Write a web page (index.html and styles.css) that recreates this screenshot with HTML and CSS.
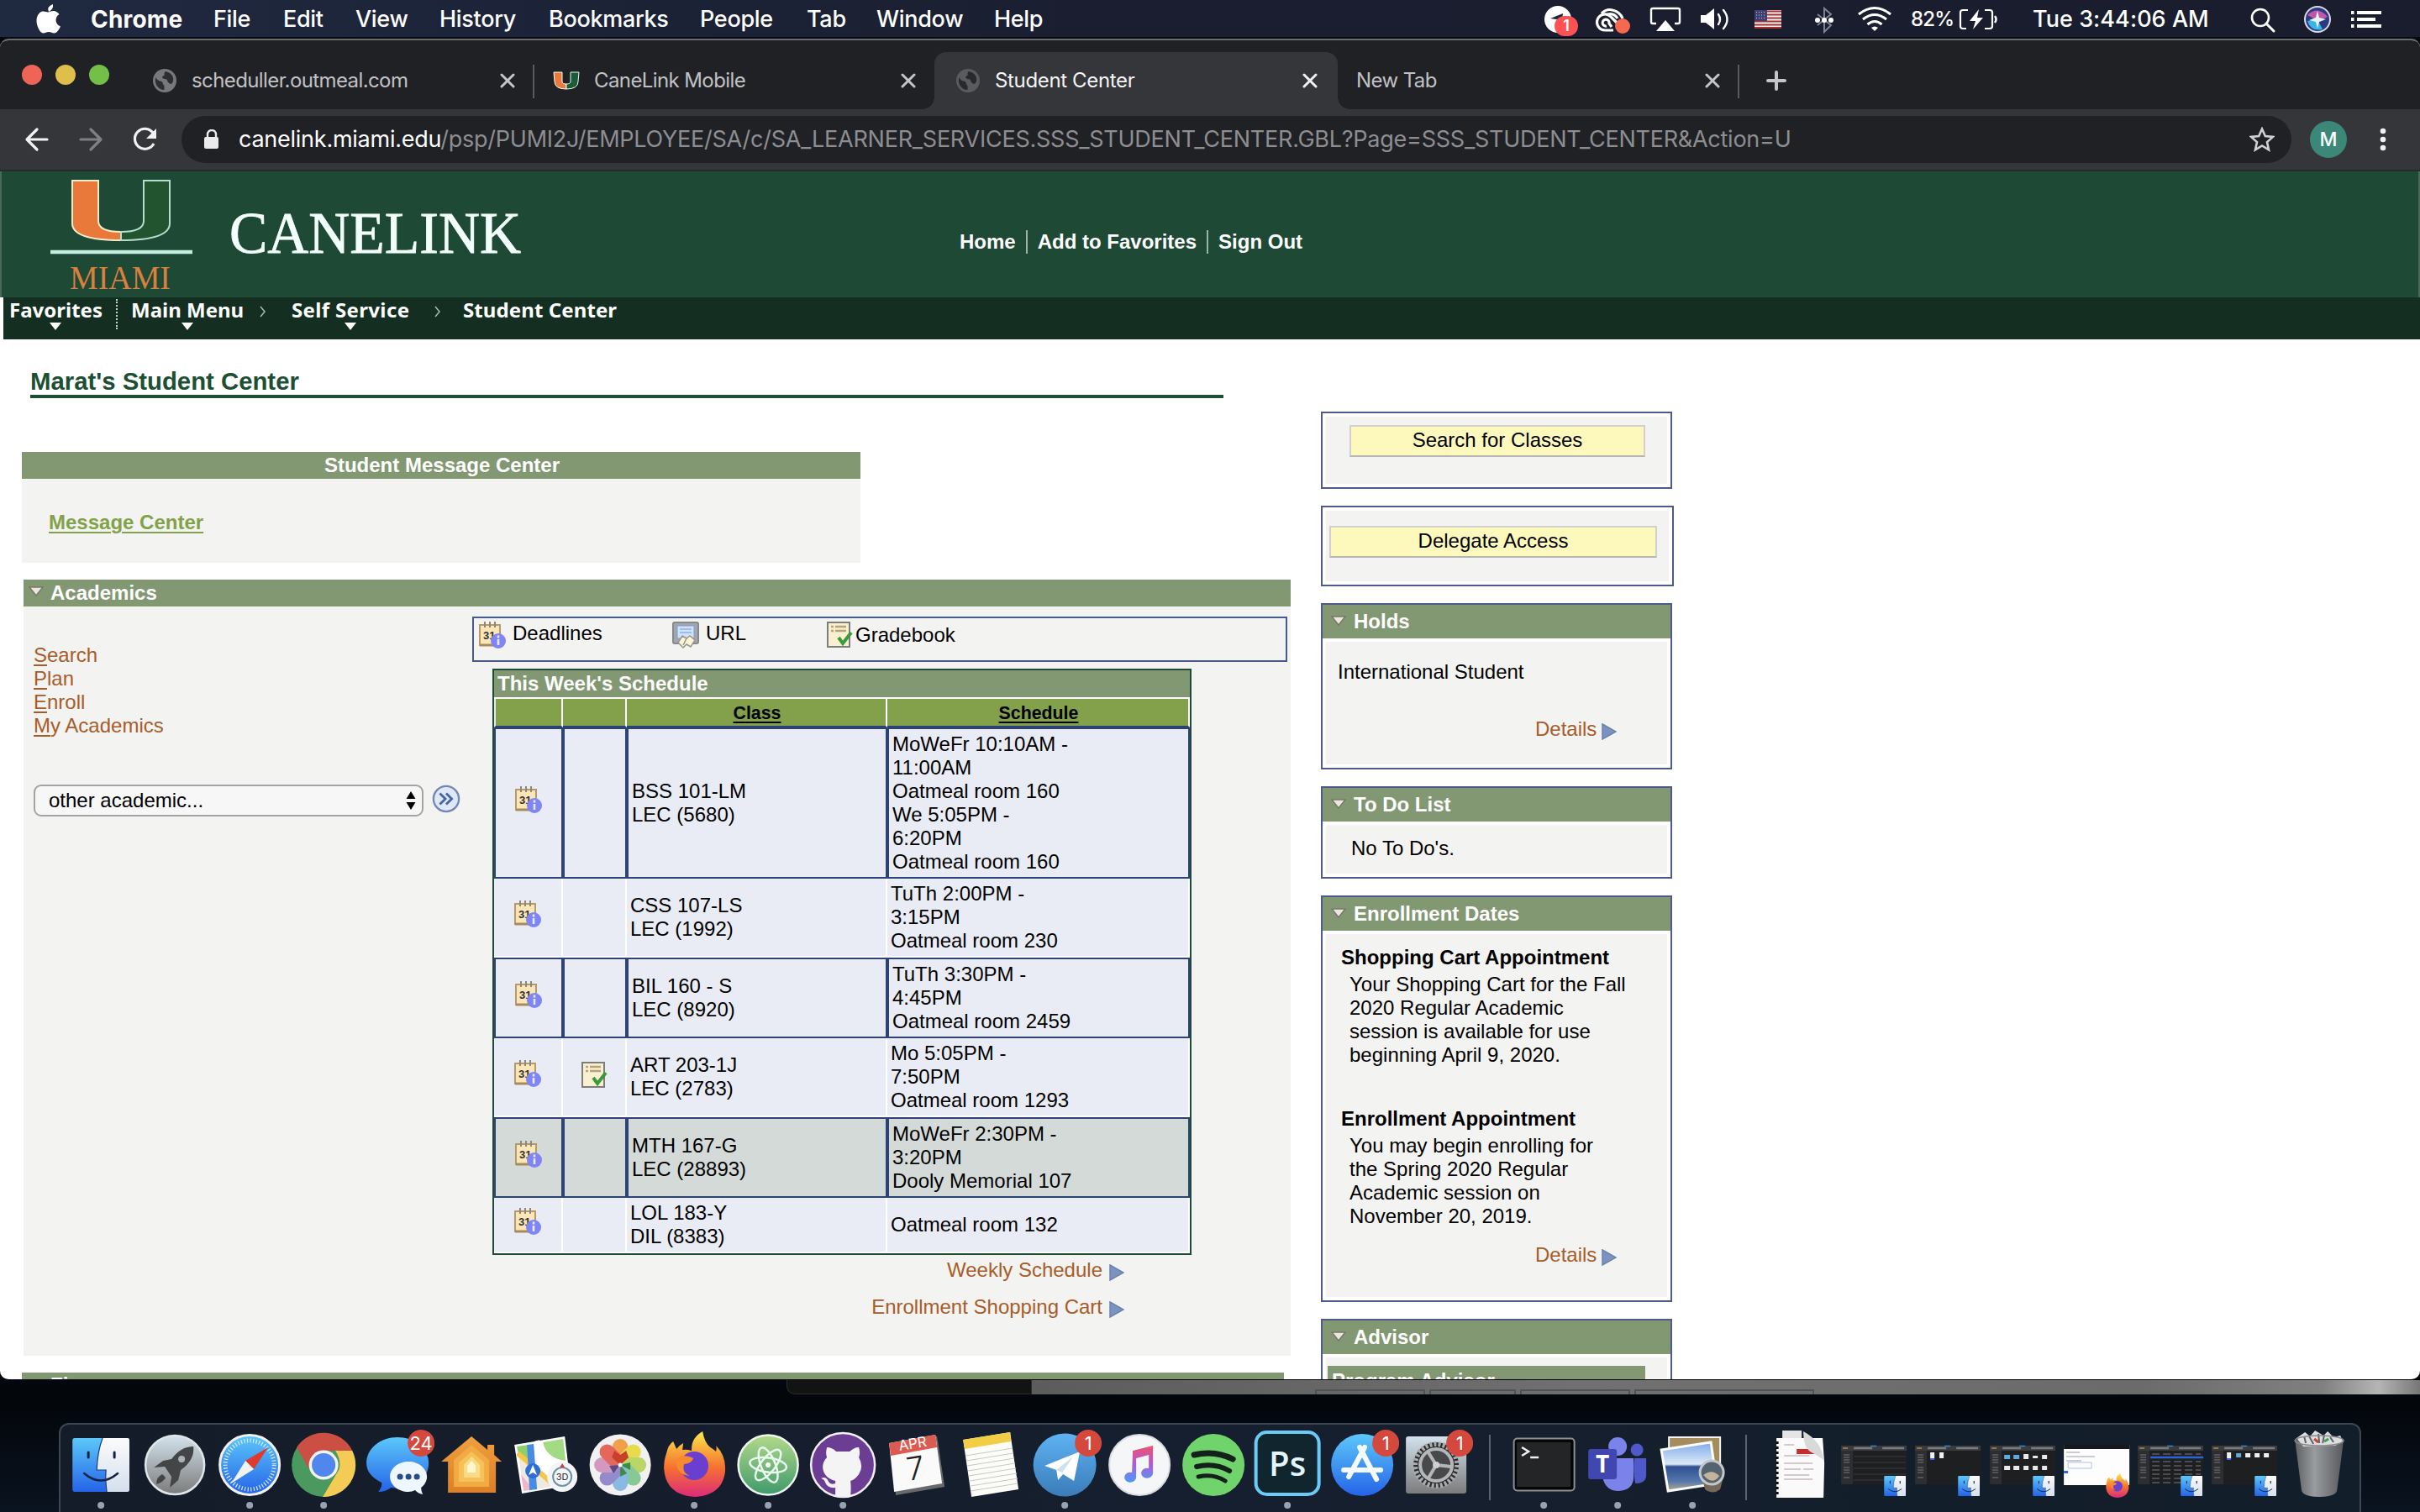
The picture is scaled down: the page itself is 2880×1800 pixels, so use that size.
FILE: index.html
```html
<!DOCTYPE html>
<html lang="en">
<head>
<meta charset="utf-8">
<title>Student Center</title>
<link rel="stylesheet" href="styles.css">
</head>
<body>
<svg class="defs" width="0" height="0">
  <defs>
    <linearGradient id="blueV" x2="0" y2="1"><stop offset="0" stop-color="#5cc8fa"/><stop offset="1" stop-color="#2563e8"/></linearGradient>
    <linearGradient id="whiteV" x2="0" y2="1"><stop offset="0" stop-color="#fbfbfb"/><stop offset="1" stop-color="#d5dfee"/></linearGradient>
    <linearGradient id="grayV" x2="0" y2="1"><stop offset="0" stop-color="#d3e2ec"/><stop offset="1" stop-color="#7b7b7b"/></linearGradient>
    <linearGradient id="atomV" x2="0" y2="1"><stop offset="0" stop-color="#b3d98a"/><stop offset="1" stop-color="#3f9a6b"/></linearGradient>
    <linearGradient id="tgV" x2="0" y2="1"><stop offset="0" stop-color="#5eb2f3"/><stop offset="1" stop-color="#3a7cb8"/></linearGradient>
    <linearGradient id="noteV" x2="0" y2="1"><stop offset="0" stop-color="#f0506a"/><stop offset=".5" stop-color="#b05ad8"/><stop offset="1" stop-color="#4a9cf8"/></linearGradient>
    <linearGradient id="ffV" x2="0" y2="1"><stop offset="0" stop-color="#fbe84a"/><stop offset=".55" stop-color="#f6712f"/><stop offset="1" stop-color="#dd2a7c"/></linearGradient>
    <linearGradient id="homeV" x2="0" y2="1"><stop offset="0" stop-color="#ef9f3f"/><stop offset="1" stop-color="#dd7f26"/></linearGradient>
    <linearGradient id="canV" x2="1" y2="0"><stop offset="0" stop-color="#5d6163"/><stop offset=".4" stop-color="#999c9e"/><stop offset="1" stop-color="#57595c"/></linearGradient>
    <linearGradient id="skyV" x2="0" y2="1"><stop offset="0" stop-color="#7fabea"/><stop offset=".45" stop-color="#dbe9f6"/><stop offset=".5" stop-color="#2f4f93"/><stop offset=".8" stop-color="#5478ab"/><stop offset="1" stop-color="#b9a98e"/></linearGradient>
    <symbol id="cal" viewBox="0 0 32 32">
      <path d="M1 4h24v24H1z" fill="#fbe6b8" stroke="#b79a6c" stroke-width="2"/>
      <path d="M1 28h20" stroke="#a98a5c" stroke-width="3"/>
      <path d="M7 0v7M13 0v7M19 0v7" stroke="#8f8778" stroke-width="2"/>
      <text x="5" y="21" class="caltext">31</text>
      <circle cx="23" cy="23" r="9" fill="#7f85f4"/>
      <path d="M23 21v7M23 16.500v3" stroke="#e8eaff" stroke-width="2.600"/>
    </symbol>
    <symbol id="grade" viewBox="0 0 32 32">
      <path d="M1 1h26v29H1z" fill="#f8f0d0" stroke="#7d7d7a" stroke-width="2"/>
      <path d="M5 6h3M10 6h13M5 11h3M10 11h13" stroke="#b9a27a" stroke-width="2.500"/>
      <path d="M14 19l5 7 10-13" fill="none" stroke="#3b9a3a" stroke-width="4"/>
    </symbol>
    <symbol id="url" viewBox="0 0 32 32">
      <rect x="1" y="1" width="30" height="25" rx="2" fill="#a3a6aa" stroke="#85888c" stroke-width="2"/>
      <rect x="6" y="5" width="20" height="15" fill="#cfe2fb" stroke="#7e9cd0"/>
      <path d="M9 9h14M9 13h14" stroke="#9dbcec" stroke-width="2"/>
      <path d="M7 25l5-8 5 3 4-3 6 5-5 8-5-3-4 4z" fill="#fbf6dc" stroke="#9a9684" stroke-width="1.500"/>
      <path d="M17 20l-4 8" stroke="#9a9684" stroke-width="1.500"/>
    </symbol>
    <symbol id="arrow" viewBox="0 0 18 20"><path d="M1 1l16 9-16 9z" fill="#7d93bf" stroke="#6a82ae" stroke-width="1.500"/></symbol>
    <symbol id="fold" viewBox="0 0 18 12"><path d="M1 1h16l-8 10z" fill="#ece7dc" stroke="#77796a" stroke-width="1.500"/></symbol>
    <symbol id="globe" viewBox="0 0 28 28">
      <circle cx="14" cy="14" r="14" fill="currentColor"/>
      <path d="M3.500 10c2 5 5 4 7 5 2 2 1 4 3 5v5C6 25 1 17 3.500 10zM15 3c-3 2 0 4-2 5-3 1-2 4 1 4 4 0 3 3 4 4 2 1 2 3 5 1 3-5 1-12-8-14z" fill="#202124" opacity=".85"/>
    </symbol>
    <symbol id="close" viewBox="0 0 18 18"><path d="M2 2l14 14M16 2L2 16" stroke="currentColor" stroke-width="3" stroke-linecap="round"/></symbol>
    <symbol id="finder" viewBox="0 0 68 64" preserveAspectRatio="none">
      <rect width="68" height="64" rx="3" fill="url(#blueV)"/>
      <path d="M36 0h29q3 0 3 3v58q0 3-3 3H41q-2-13-1-26H29Q30 15 36 0z" fill="url(#whiteV)"/>
      <path d="M19 17v6M50 17v6" stroke="#12233f" stroke-width="3" stroke-linecap="round"/>
      <path d="M14 42q20 17 40 0" fill="none" stroke="#12233f" stroke-width="2.500" stroke-linecap="round"/>
      <path d="M36 0Q30 15 29 38h11q-1 13 1 26" fill="none" stroke="#1b3c74" stroke-width="1.200"/>
    </symbol>
    <symbol id="fox" viewBox="0 0 74 78">
      <path d="M4 26q2-10 8-14l4 9q4-5 8-7l-1 8q5-1 11 1Q33 8 47 0q2 12 8 18 6 4 8 6 1-4 0-7 12 12 11 30Q71 76 38 78 3 76 1 44q0-10 3-18z" fill="url(#ffV)"/>
      <circle cx="37" cy="41" r="17" fill="#6a3fd0"/>
      <path d="M22 29q9 0 14 3-2 6-11 7-3 10 7 14-14-1-16-13-1-7 6-11z" fill="#f58a30"/>
    </symbol>
    <symbol id="fthumb" viewBox="0 0 88 102">
      <rect x="5" y="25" width="78" height="46" fill="#1e1f21"/><rect x="5" y="25" width="78" height="6" fill="#3a3b3e"/>
      <path d="M5 31h14v40H5z" fill="#2d2e31"/>
      <path d="M7 28h6" stroke="#b9863b" stroke-width="1.500"/><path d="M20 28h22M54 28h26" stroke="#7a7b7d" stroke-width="2.500"/><path d="M40 25.500h7" stroke="#3b87c8" stroke-width="1.500"/>
      <path d="M8 36h7M8 39h7M8 42h7M8 45h7M8 51h7M8 54h7M8 57h7M8 63h7" stroke="#77797c" stroke-width="1.200"/>
    </symbol>
    <symbol id="fbadge" viewBox="0 0 88 102"><use href="#finder" x="56" y="61" width="26" height="24"/></symbol>
    <symbol id="dot" viewBox="0 0 88 102"><circle cx="44" cy="96" r="4" fill="#98a3b2"/></symbol>
  </defs>
</svg>

<header class="menubar">
  <svg class="apple" viewBox="0 0 100 44"><path d="M59 4q1 6-5 9-3-6 5-9zM53 13.500c2 0 3-1.500 6.500-1.500 3 0 5.500 2 7 4-6 3.500-5 12 1.500 14.500-1.500 3.500-4.500 8-7.500 8-2.500 0-3.500-1.500-6.500-1.500s-4 1.500-6.500 1.500c-5 0-12-16-5-23.500 4-4.500 8-1.500 10.500-1.500z" fill="#fff"/></svg>
  <nav class="menus"><b>Chrome</b><span>File</span><span>Edit</span><span>View</span><span>History</span><span>Bookmarks</span><span>People</span><span>Tab</span><span>Window</span><span>Help</span></nav>
  <svg viewBox="1830 0 58 44"><circle cx="1854" cy="22" r="16" fill="#fff"/><path d="M1845 21l15-6-1 8" fill="#20263a"/><rect x="1850" y="18" width="28" height="24" rx="12" fill="#fd5154"/><text x="1864" y="36" class="mb1">1</text></svg>
  <svg viewBox="1888 0 64 44"><g fill="none" stroke="#fff" stroke-width="3.200"><path d="M1920 35h-10a9.500 9.500 0 1 1 7-16l9 9"/><path d="M1918 31l-3-4a4 4 0 1 0-3 3M1906 15q6-6 13-4 9 2 12 10M1913 16q8-2 12 5"/></g><circle cx="1931" cy="30" r="9" fill="#f4694f"/></svg>
  <svg viewBox="1952 0 60 44"><path d="M1971 27h-4q-2 0-2-2V11q0-2 2-2h30q2 0 2 2v14q0 2-2 2h-4" fill="none" stroke="#fff" stroke-width="2.400"/><path d="M1982 23l11 13h-22z" fill="#fff"/></svg>
  <svg viewBox="2012 0 60 44"><path d="M2024 17h6l10-8v25l-10-8h-6z" fill="#fff"/><path d="M2045 16q4 6 0 12M2051 11q9 11 0 22" fill="none" stroke="#fff" stroke-width="2.400" stroke-linecap="round"/></svg>
  <svg viewBox="2072 0 64 44"><path fill="#f4f4f4" d="M2088 11h32v22h-32z"/><path d="M2088 12.500h32M2088 16.500h32M2088 20.500h32M2088 24.500h32M2088 28.500h32M2088 32h32" stroke="#a83232" stroke-width="2"/><path fill="#3f3f72" d="M2088 11h15v13h-15z"/><path d="M2090 13.500h12M2090 17h12M2090 20.500h12" stroke="#c5c5dc" stroke-width="1" stroke-dasharray="1 2"/></svg>
  <svg viewBox="2136 0 64 44"><path d="M2163 16l16 13-8 8V9l8 7-16 13" fill="none" stroke="#7d8492" stroke-width="2"/><g fill="#fff"><circle cx="2163" cy="23" r="3"/><circle cx="2171" cy="23" r="3"/><circle cx="2179" cy="23" r="3"/></g></svg>
  <svg viewBox="2200 0 62 44"><path d="M2212 16q19-15 38 0M2217 22q14-11 28 0M2222.500 28q8.500-7 17 0" fill="none" stroke="#fff" stroke-width="3"/><path d="M2227 32q4-3 8 0l-4 4z" fill="#fff"/></svg>
  <span class="pct">82%</span>
  <svg viewBox="2326 0 66 44"><path d="M2342 11h-6q-3 0-3 3v16q0 3 3 3h4M2362 11h6q3 0 3 3v16q0 3-3 3h-6" fill="none" stroke="#fff" stroke-width="2.200"/><path d="M2374 18q3 4 0 8" stroke="#fff" stroke-width="2.500" fill="none"/><path d="M2355 10l-11 14h7l-3 10 12-14h-7z" fill="#fff"/></svg>
  <span class="clock">Tue 3:44:06 AM</span>
  <svg viewBox="2650 0 80 44"><circle cx="2690" cy="20" r="10" fill="none" stroke="#fff" stroke-width="2.600"/><path d="M2697 27l9 9" stroke="#fff" stroke-width="3" stroke-linecap="round"/></svg>
  <svg viewBox="2730 0 56 44"><circle cx="2758" cy="22" r="15" fill="#2c3a86" stroke="#d9d9e4" stroke-width="2"/><path d="M2746 17q12-12 24 2l-11 5z" fill="#c355a8"/><path d="M2746 24l12-2 6 12q-14 3-18-10z" fill="#38b5e6"/><path d="M2758 12l2 8 8 2-8 3-2 8-2-8-8-2 8-3z" fill="#e6f4ff"/></svg>
  <svg viewBox="2786 0 94 44"><path d="M2798 14h3.500M2798 22h3.500M2798 30h3.500M2805 14h29M2805 22h22M2805 30h29" stroke="#fff" stroke-width="4"/></svg>
</header>

<main class="window">
  <div class="tabstrip">
    <div class="lights"><i class="red"></i><i class="yellow"></i><i class="green"></i></div>
    <div class="tab t1"><svg class="fav"><use href="#globe"/></svg><span>scheduller.outmeal.com</span><svg class="x"><use href="#close"/></svg></div>
    <div class="tab t2"><svg class="fav u" viewBox="0 0 32 22"><path d="M1 1h10v11q0 3 5 3v6Q2 21 2 12z" fill="#e87a3c" stroke="#fff"/><path d="M31 1H21v11q0 3-5 3v6q14 0 14-9z" fill="#1d5a3a" stroke="#dfe" /></svg><span>CaneLink Mobile</span><svg class="x"><use href="#close"/></svg></div>
    <div class="tab active"><svg class="fav"><use href="#globe"/></svg><span>Student Center</span><svg class="x"><use href="#close"/></svg></div>
    <div class="tab t4"><span>New Tab</span><svg class="x"><use href="#close"/></svg></div>
    <svg class="plus" viewBox="0 0 24 24"><path d="M12 2v20M2 12h20" stroke="#c4c5c7" stroke-width="4" stroke-linecap="round"/></svg>
  </div>
  <div class="toolbar">
    <svg class="nav" viewBox="0 130 216 72"><g fill="none" stroke-width="3.200" stroke-linecap="round" stroke-linejoin="round"><path d="M56 166H33M44 154l-12 12 12 12" stroke="#f1f1f1"/><path d="M96 166h23M108 154l12 12-12 12" stroke="#7f8084"/><path d="M182 158a12 12 0 1 0 1 13" stroke="#f1f1f1" stroke-linecap="butt"/></g><path d="M186 153v12h-12z" fill="#f1f1f1"/></svg>
    <div class="omnibox">
      <svg class="lock" viewBox="0 0 18 24"><path d="M4 9V6a5 5 0 0 1 10 0v3" fill="none" stroke="#ebebeb" stroke-width="2.400"/><rect y="9" width="17" height="14" rx="2" fill="#ebebeb"/></svg>
      <span class="url"><b>canelink.miami.edu</b>/psp/PUMI2J/EMPLOYEE/SA/c/SA_LEARNER_SERVICES.SSS_STUDENT_CENTER.GBL?Page=SSS_STUDENT_CENTER&amp;Action=U</span>
      <svg class="star" viewBox="0 0 30 30"><path d="M15 2.500l3.800 8.500 9.200.9-7 6.200 2 9.200-8-4.800-8 4.800 2-9.200-7-6.200 9.200-.9z" fill="none" stroke="#d0d1d3" stroke-width="2.600"/></svg>
    </div>
    <div class="avatar">M</div>
    <svg class="kebab" viewBox="0 0 8 28"><g fill="#f1f1f1"><circle cx="4" cy="4" r="3.300"/><circle cx="4" cy="14" r="3.300"/><circle cx="4" cy="24" r="3.300"/></g></svg>
  </div>

  <div class="page">
    <div class="brand">
      <svg class="logo" viewBox="0 204 640 150">
        <path d="M86 215h31v48q0 13 27 13v10q-58 0-58-20z" fill="#e8793a" stroke="#f2ecca" stroke-width="2"/>
        <path d="M202 215h-31v48q0 13-27 13v10q58 0 58-20z" fill="#22542f" stroke="#b5ddcf" stroke-width="2"/>
        <path d="M60 300h169" stroke="#c6ecdf" stroke-width="4.500"/>
        <text x="83" y="344" textLength="120" lengthAdjust="spacingAndGlyphs" class="miami">MIAMI</text>
        <text x="273" y="301" textLength="347" lengthAdjust="spacingAndGlyphs" class="cane">CANELINK</text>
      </svg>
      <nav class="toplinks"><a>Home</a><a>Add to Favorites</a><a>Sign Out</a></nav>
    </div>
    <nav class="crumbs"><a class="drop">Favorites</a><i class="dots"></i><a class="drop">Main Menu</a><svg viewBox="0 0 8 14"><path d="M1 1l5 6-5 6" /></svg><a class="drop wide">Self Service</a><svg viewBox="0 0 8 14"><path d="M1 1l5 6-5 6"/></svg><a>Student Center</a></nav>

    <div class="content">
      <section class="main">
        <h1>Marat's Student Center</h1>
        <div class="message"><h2>Student Message Center</h2><a>Message Center</a></div>
        <div class="academics">
          <h2><svg class="fold"><use href="#fold"/></svg>Academics</h2>
          <div class="acbody">
            <div class="aclinks">
              <a><u>S</u>earch</a><a><u>P</u>lan</a><a><u>E</u>nroll</a><a><u>M</u>y Academics</a>
              <div class="pick">
                <div class="select"><span>other academic...</span><svg viewBox="0 0 12 22"><path d="M6 0l5.500 9H.5zM6 22l5.500-9H.5z"/></svg></div>
                <svg class="go" viewBox="0 0 36 36"><circle cx="18" cy="18" r="16" fill="#dfe8f7" stroke="#7387b4" stroke-width="2.500"/><path d="M10 11l7 7-7 7M18 11l7 7-7 7" fill="none" stroke="#4a65a3" stroke-width="3"/></svg>
              </div>
            </div>
            <div class="acmain">
              <div class="legend"><svg><use href="#cal"/></svg><span>Deadlines</span><svg><use href="#url"/></svg><span>URL</span><svg><use href="#grade"/></svg><span class="low">Gradebook</span></div>
              <div class="sched">
                <h3>This Week's Schedule</h3>
                <div class="row head"><div></div><div></div><div>Class</div><div>Schedule</div></div>
                <div class="row boxed"><div><svg><use href="#cal"/></svg></div><div></div><div>BSS 101-LM<br>LEC (5680)</div><div>MoWeFr 10:10AM -<br>11:00AM<br>Oatmeal room 160<br>We 5:05PM -<br>6:20PM<br>Oatmeal room 160</div></div>
                <div class="row"><div><svg><use href="#cal"/></svg></div><div></div><div>CSS 107-LS<br>LEC (1992)</div><div>TuTh 2:00PM -<br>3:15PM<br>Oatmeal room 230</div></div>
                <div class="row boxed"><div><svg><use href="#cal"/></svg></div><div></div><div>BIL 160 - S<br>LEC (8920)</div><div>TuTh 3:30PM -<br>4:45PM<br>Oatmeal room 2459</div></div>
                <div class="row"><div><svg><use href="#cal"/></svg></div><div><svg><use href="#grade"/></svg></div><div>ART 203-1J<br>LEC (2783)</div><div>Mo 5:05PM -<br>7:50PM<br>Oatmeal room 1293</div></div>
                <div class="row boxed shade"><div><svg><use href="#cal"/></svg></div><div></div><div>MTH 167-G<br>LEC (28893)</div><div>MoWeFr 2:30PM -<br>3:20PM<br>Dooly Memorial 107</div></div>
                <div class="row"><div><svg><use href="#cal"/></svg></div><div></div><div>LOL 183-Y<br>DIL (8383)</div><div>Oatmeal room 132</div></div>
              </div>
              <div class="more"><a>Weekly Schedule<svg><use href="#arrow"/></svg></a><a>Enrollment Shopping Cart<svg><use href="#arrow"/></svg></a></div>
            </div>
          </div>
        </div>
        <div class="finances"><h2>Finances</h2></div>
      </section>

      <aside class="side">
        <div class="card search"><div class="inner"><button>Search for Classes</button></div></div>
        <div class="card delegate"><div class="inner"><button>Delegate Access</button></div></div>
        <div class="card holds"><h2><svg class="fold"><use href="#fold"/></svg>Holds</h2><div class="inner"><p>International Student</p><a class="details">Details<svg><use href="#arrow"/></svg></a></div></div>
        <div class="card todo"><h2><svg class="fold"><use href="#fold"/></svg>To Do List</h2><div class="inner"><p>No To Do's.</p></div></div>
        <div class="card dates"><h2><svg class="fold"><use href="#fold"/></svg>Enrollment Dates</h2><div class="inner"><h4>Shopping Cart Appointment</h4><p>Your Shopping Cart for the Fall<br>2020 Regular Academic<br>session is available for use<br>beginning April 9, 2020.</p><h4>Enrollment Appointment</h4><p>You may begin enrolling for<br>the Spring 2020 Regular<br>Academic session on<br>November 20, 2019.</p><a class="details">Details<svg><use href="#arrow"/></svg></a></div></div>
        <div class="card advisor"><h2><svg class="fold"><use href="#fold"/></svg>Advisor</h2><div class="inner"><h5>Program Advisor</h5></div></div>
      </aside>
    </div>
  </div>
</main>

<div class="behind"><div class="bdark"></div><div class="bgray"><i></i><i></i><i></i><i></i></div></div>

<footer class="dock">
  <svg viewBox="0 0 88 102"><use href="#finder" x="10" y="16" width="68" height="64"/><use href="#dot"/></svg>
  <svg viewBox="0 0 88 102"><circle cx="44" cy="48" r="35" fill="url(#grayV)" stroke="#dfe6ea" stroke-width="2.500"/><path d="M66 26q-15 0-26 15l-10 2-11 8 13-1 8 12-2 13 10-9 3-12Q68 42 66 26z" fill="#434547"/><circle cx="52" cy="41" r="4" fill="#aab2b8"/><path d="M29 59q-7 3-7 12 9-3 11-8z" fill="#434547"/></svg>
  <svg viewBox="0 0 88 102"><circle cx="44" cy="48" r="35.500" fill="url(#blueV)" stroke="#f0f0f0" stroke-width="3"/><circle cx="44" cy="48" r="29" fill="none" stroke="#d7ecfb" stroke-width="5" stroke-dasharray="1.200 2.400"/><path d="M66 27L49 53l-10-10z" fill="#e0392e"/><path d="M22 70l17-27 10 10z" fill="#f2f2f2"/><use href="#dot"/></svg>
  <svg viewBox="0 0 88 102"><circle cx="44" cy="48" r="38" fill="#4a9a5f"/><path d="M12 27a38 38 0 0 1 66 4H44L26 52z" fill="#cb4f43"/><path d="M78 31a38 38 0 0 1-35 55l19-32q4-10-4-23z" fill="#f3cb55"/><circle cx="44" cy="48" r="17.500" fill="#f3f3f3"/><circle cx="44" cy="48" r="14" fill="#4f87ec"/><use href="#dot"/></svg>
  <svg viewBox="0 0 88 102"><path d="M44 15c20 0 37 13 37 31S64 76 44 76l-8-1q-6 5-15 5 5-6 4-11Q7 60 7 46c0-18 17-31 37-31z" fill="url(#blueV)"/><path d="M57 44c12 0 22 8 22 18 0 5-3 10-7 13q0 4 2 8-6-1-9-5-4 2-8 2c-12 0-22-8-22-18s10-18 22-18z" fill="#eef6ff"/><g fill="#274c8c"><circle cx="47" cy="62" r="3.500"/><circle cx="57" cy="62" r="3.500"/><circle cx="67" cy="62" r="3.500"/></g><circle cx="72" cy="22" r="16" fill="#d4483d"/><text x="72" y="30" class="bt">24</text></svg>
  <svg viewBox="0 0 88 102"><path d="M44 14L8 44h8v37h57V44h7l-9-8V24h-8v6z" fill="url(#homeV)"/><path d="M44 24L23 42v32h42V42z" fill="#f2ab42"/><path d="M44 32L29 45v23h30V45z" fill="#f5c25a"/><path d="M44 38L35 48v15h19V48z" fill="#f9dc86"/><path d="M44 43l-5 6v8h10v-8z" fill="#fff7cf"/></svg>
  <svg viewBox="0 0 88 102"><path d="M6 24L66 14l7 58-58 10z" fill="#fff"/><path d="M9 26l14-2 5 22-17-10z" fill="#8ccf6b"/><path d="M40 21l24-4 3 26Q44 40 40 21z" fill="#a3db84"/><path d="M11 36l34 30 23-1 2 6-53 8z" fill="#efe9df"/><path d="M10 34l40 35" stroke="#f2c746" stroke-width="6"/><path d="M14 59l14 18-11 2z" fill="#f1b6cb"/><path d="M21 24l8-1 4 54-9 1z" fill="#4a8be2"/><path d="M33 19q6 25 35 28" fill="none" stroke="#fff" stroke-width="6"/><circle cx="28" cy="55" r="9" fill="#2d6fd4"/><path d="M28 48l5 12-5-3-5 3z" fill="#fff"/><circle cx="63" cy="62" r="18" fill="#f4f5f6"/><circle cx="63" cy="62" r="11" fill="none" stroke="#6c93a8" stroke-width="2"/><path d="M63 46l3 5h-6z" fill="#d43a3a"/><text x="63" y="66" class="t3d">3D</text></svg>
  <svg viewBox="0 0 88 102"><circle cx="44" cy="48" r="36.500" fill="#f1f1f1"/><g opacity=".9"><rect x="35" y="17" width="18" height="30" rx="9" fill="#f2973a"/><rect x="35" y="17" width="18" height="30" rx="9" fill="#e8d93c" transform="rotate(45 44 48)"/><rect x="35" y="17" width="18" height="30" rx="9" fill="#b5d458" transform="rotate(90 44 48)"/><rect x="35" y="17" width="18" height="30" rx="9" fill="#7cc48e" transform="rotate(135 44 48)"/><rect x="35" y="17" width="18" height="30" rx="9" fill="#7fb4e2" transform="rotate(180 44 48)"/><rect x="35" y="17" width="18" height="30" rx="9" fill="#8a7fc8" transform="rotate(225 44 48)"/><rect x="35" y="17" width="18" height="30" rx="9" fill="#cf8fb8" transform="rotate(270 44 48)"/><rect x="35" y="17" width="18" height="30" rx="9" fill="#e4574d" transform="rotate(315 44 48)"/></g><path d="M44 48l-10-9 3-8 7 5zM44 48l10-9-3-8-7 5z" fill="#c8402a"/><path d="M44 48l12-3v9zM44 48l8 10-8 4z" fill="#3d8a4e"/><path d="M44 48l-8 10-5-9zM44 48l-3 13" fill="#5c4a86"/><circle cx="44" cy="48" r="2.500" fill="#fff"/></svg>
  <svg viewBox="0 0 88 102"><use href="#fox" x="7" y="8" width="74" height="78"/><use href="#dot"/></svg>
  <svg viewBox="0 0 88 102"><circle cx="44" cy="48" r="35.500" fill="url(#atomV)" stroke="#eef5ee" stroke-width="2.500"/><g fill="none" stroke="#eafaf0" stroke-width="2.500"><ellipse cx="44" cy="48" rx="22" ry="8.500" transform="rotate(8 44 48)"/><ellipse cx="44" cy="48" rx="22" ry="8.500" transform="rotate(68 44 48)"/><ellipse cx="44" cy="48" rx="22" ry="8.500" transform="rotate(-52 44 48)"/></g><circle cx="44" cy="48" r="3" fill="#fff"/><use href="#dot"/></svg>
  <svg viewBox="0 0 88 102"><circle cx="44" cy="48" r="38" fill="#6b3e94" stroke="#f3effa" stroke-width="2.500"/><path d="M25 27q6 0 11 5h16q5-5 11-5 2 7 0 12 6 11 0 20-4 6-10 8 1 8 0 18H35V75q-9 1-12-6-1-4-5-5 6-3 9 4 2 4 8 2v-3q-14-4-15-16 0-7 5-12-2-5 0-12z" fill="#f4f4f4"/><use href="#dot"/></svg>
  <svg viewBox="0 0 88 102"><path d="M12 24l56-10 9 60-58 10z" fill="#68696b"/><path d="M11 22L66 12l8 58-57 10z" fill="#fafafa"/><path d="M11 22L66 12l2 15-55 10z" fill="#dc5a50"/><g transform="rotate(-9 44 48)"><text x="43" y="28" class="apr">APR</text><text x="42" y="65" class="seven">7</text></g></svg>
  <svg viewBox="0 0 88 102"><path d="M11 18l56-9 10 68-56 9z" fill="#fcfcf8"/><path d="M11 18l56-9 1 11-55 9z" fill="#f2ce45"/><path d="M14 37l56-9M15 43l56-9M16 49l56-9M17 55l56-9M18 61l56-9M19 67l56-9M20 73l56-9M20 79l56-9" stroke="#c9c9c4" stroke-width="1"/></svg>
  <svg viewBox="0 0 88 102"><circle cx="44" cy="48" r="37.500" fill="url(#tgV)"/><path d="M20 49l42-17-7 35-13-8-6 7-2-12-14-5z" fill="#fff"/><path d="M34 54l20-16-13 19" fill="#cfe0ef"/><circle cx="72" cy="22" r="16" fill="#d4483d"/><text x="72" y="30" class="bt">1</text><use href="#dot"/></svg>
  <svg viewBox="0 0 88 102"><circle cx="44" cy="48" r="36" fill="#f5f6f8" stroke="#dadce2" stroke-width="2"/><path d="M36 31l24-6v33a7 6 0 1 1-5-6V36l-15 4v23a7 6 0 1 1-5-6z" fill="url(#noteV)"/></svg>
  <svg viewBox="0 0 88 102"><circle cx="44" cy="48" r="37" fill="#70d36c"/><g fill="none" stroke="#14211a" stroke-linecap="round"><path d="M21 36q25-6 46 5" stroke-width="7"/><path d="M24 50q21-5 39 5" stroke-width="6"/><path d="M26 62q18-4 32 5" stroke-width="5"/></g></svg>
  <svg viewBox="0 0 88 102"><rect x="6.500" y="9" width="75" height="74" rx="13" fill="#11252e" stroke="#6bcbf6" stroke-width="4"/><text x="44" y="61" class="ps">Ps</text><use href="#dot"/></svg>
  <svg viewBox="0 0 88 102"><circle cx="44" cy="48" r="37" fill="url(#blueV)"/><g stroke="#f4f8ff" stroke-width="6" stroke-linecap="round"><path d="M47 27L28 62M41 27l20 38M22 54h44"/></g><circle cx="72" cy="22" r="16" fill="#d4483d"/><text x="72" y="30" class="bt">1</text></svg>
  <svg viewBox="0 0 88 102"><rect x="8" y="14" width="72" height="68" rx="3" fill="url(#grayV)"/><circle cx="44" cy="48" r="27" fill="#2b2c2e"/><circle cx="44" cy="48" r="25" fill="none" stroke="#a9acaf" stroke-width="6" stroke-dasharray="3 2.200"/><circle cx="44" cy="48" r="19" fill="#47494b" stroke="#b4b7b9" stroke-width="4"/><path d="M44 48l18 2M44 48L34 32M44 48L34 65" stroke="#b4b7b9" stroke-width="4"/><circle cx="44" cy="48" r="4" fill="#cfd1d3"/><circle cx="72" cy="22" r="16" fill="#d4483d"/><text x="72" y="30" class="bt">1</text></svg>
  <i class="sep"></i>
  <svg viewBox="0 0 88 102"><rect x="8.500" y="16.500" width="72" height="62" rx="4" fill="#050505" stroke="#8d9092" stroke-width="2"/><rect x="12" y="21" width="64" height="53" fill="#242526"/><path d="M18 27l8 5-8 5M28 39h10" fill="none" stroke="#f0f0f0" stroke-width="2.500"/><use href="#dot"/></svg>
  <svg viewBox="0 0 88 102"><g fill="#7b83eb"><circle cx="44" cy="26" r="11"/><path d="M26 40h37v22q0 16-18 17-16 0-19-17z"/></g><circle cx="67" cy="30" r="7.500" fill="#5059c9"/><path d="M64 40h14v20q0 10-13 10-3-15-1-30z" fill="#5059c9"/><rect x="9" y="29" width="34" height="36" rx="3" fill="#4047b0"/><text x="26" y="57" class="tee">T</text><use href="#dot"/></svg>
  <svg viewBox="0 0 88 102"><path d="M16 15h61v50H16z" fill="#a58c5d" stroke="#f4f4f4" stroke-width="2"/><path d="M7 30l59-9 7 49-58 9z" fill="url(#skyV)" stroke="#fbfbfb" stroke-width="3"/><path d="M54 58l5 19q9 7 18 0l5-19z" fill="#77695a"/><circle cx="67" cy="57" r="14" fill="#55626f" stroke="#c4c7c9" stroke-width="3"/><path d="M57 60q10-8 19 1-8 12-19-1z" fill="#c3b49b"/><use href="#dot"/></svg>
  <i class="sep"></i>
  <svg viewBox="0 0 88 102"><path d="M23 7h23v12H23z" fill="#e5e5e5"/><path d="M16 16h55l2 30-1 41H16z" fill="#fafafa"/><path d="M17 20v64" stroke="#111" stroke-width="3" stroke-dasharray="3 3"/><path d="M40 29h22v6H40z" fill="#cf2a2a"/><path d="M48 8q0 18 8 24 8 4 16 10-2-22-24-34z" fill="#d9d9d9"/><path d="M25 24h12M25 37h30M25 46h34M25 53h20M48 53h12M25 60h30M25 65h34" stroke="#c9b9bc" stroke-width="1.500"/></svg>
  <svg viewBox="0 0 88 102"><use href="#fthumb"/><path d="M20 38h62M20 45h62M20 52h62M20 59h62M20 66h62" stroke="#2b2c2e" stroke-width="2"/><use href="#fbadge"/></svg>
  <svg viewBox="0 0 88 102"><use href="#fthumb"/><path d="M23 33h5v7h-5zM34 33h5v7h-5z" fill="#f1f1f1"/><path d="M23 41h5" stroke="#2e6be0" stroke-width="2"/><use href="#fbadge"/></svg>
  <svg viewBox="0 0 88 102"><use href="#fthumb"/><path d="M22 36h7v5h-7zM33 36h7v5h-7z" fill="#5fa9dc"/><path d="M45 35h6v6h-6zM56 37h6v3h-6zM67 36h6v5h-6zM22 49h7v5h-7zM33 49h7v5h-7zM45 49h6v5h-6zM56 49h6v5h-6zM67 49h6v5h-6z" fill="#e9e9e9"/><use href="#fbadge"/></svg>
  <svg viewBox="0 0 88 102"><path d="M5 24h78v48H5z" fill="#fdfdfd"/><path d="M5 24h78v5H5z" fill="#17181b"/><path d="M8 33h16M8 38h34M8 43h18" stroke="#b9bcc2" stroke-width="1.500"/><path d="M10 45h28v7H10z" fill="none" stroke="#a9c4ee"/><path d="M5 55h5v3H5z" fill="#2e6be0"/><use href="#fox" x="54" y="58" width="29" height="29"/></svg>
  <svg viewBox="0 0 88 102"><use href="#fthumb"/><path d="M22 35h58M22 44h58M22 49h58M22 54h58M22 59h58M22 64h58M22 69h58" stroke="#5b5c5f" stroke-width="1.500" stroke-dasharray="9 4"/><path d="M20 39h63" stroke="#2b63d8" stroke-width="2.500"/><use href="#fbadge"/></svg>
  <svg viewBox="0 0 88 102"><use href="#fthumb"/><path d="M23 33h5v7h-5zM45 34h6v5h-6zM56 34h6v5h-6zM67 34h6v5h-6z" fill="#f1f1f1"/><path d="M34 34h6v5h-6z" fill="#5fa9dc"/><path d="M23 41h5" stroke="#2e6be0" stroke-width="2"/><use href="#fbadge"/></svg>
  <svg viewBox="0 0 88 102"><path d="M15 18l8 61q3 7 21 7t21-7l8-61z" fill="url(#canV)"/><path d="M17 16l10-7 6 5 6-7 10 6 5-5 7 7 8-2 3 7-9 5-38 1z" fill="#dedede"/><path d="M32 14l5 9M50 12l-2 10M57 15l4 6M26 14l2 8M43 11l1 11" stroke="#5d6368" stroke-width="2"/><path d="M38 17l5 4" stroke="#c2453d" stroke-width="3"/><path d="M50 20l5-3" stroke="#3f9a5c" stroke-width="3"/><ellipse cx="44" cy="19" rx="29" ry="6" fill="none" stroke="#84898c" stroke-width="1.500"/></svg>
</footer>
</body>
</html>
```

FILE: styles.css
```css
* { box-sizing: border-box; margin: 0; padding: 0; }
body { width: 2880px; height: 1800px; overflow: hidden; display: flex; flex-direction: column; background: linear-gradient(#04070d 1642px, #03060b 1665px, #0a1320 1800px); font: 24px/28px "Liberation Sans", Arial, sans-serif; color: #000; }
h1, h2, h3, h4, h5 { font-size: 24px; line-height: 28px; font-weight: bold; }
.defs { position: absolute; }
svg { display: block; }
.caltext { font: bold 13px "Liberation Sans", sans-serif; fill: #333; }

.menubar { flex: none; height: 46px; background: linear-gradient(90deg, #1f2940, #1a1e30 45%, #191d2d); border-bottom: 2px solid #070a14; display: grid; grid-template-columns: 108px 1722px 58px 64px 60px 60px 64px 64px 62px 64px 66px 258px 80px 56px 94px; align-items: center; color: #fff; font: 500 27px/44px Inter, sans-serif; }
.menubar svg { height: 44px; width: 100%; }
.menus { display: grid; grid-template-columns: 146px 83px 86px 100px 130px 180px 127px 83px 140px 100px; letter-spacing: -.3px; padding-top: 1px; }
.menus b { font-size: 28px; font-weight: 700; letter-spacing: .2px; }
.mb1 { font: 600 18px Inter, sans-serif; fill: #fff; text-anchor: middle; }
.pct { font-size: 24px; letter-spacing: -.8px; padding-left: 12px; }
.clock { padding: 1px 0 0 27px; letter-spacing: .05px; white-space: nowrap; }

.window { flex: none; height: 1596px; border-radius: 10px; overflow: hidden; border-top: 2px solid #6b6c6e; background: #fff; display: flex; flex-direction: column; }
.tabstrip { flex: none; height: 82px; background: #202124; display: flex; align-items: flex-end; padding-left: 26px; font: 400 24px/28px Inter, sans-serif; color: #c0c1c4; }
.lights { display: flex; gap: 16px; width: 136px; height: 53px; }
.lights i { width: 24px; height: 24px; border-radius: 50%; }
.red { background: #ee6558; } .yellow { background: #dfbf4b; } .green { background: #73bf47; }
.tab { height: 68px; display: flex; align-items: center; white-space: nowrap; padding-left: 20px; letter-spacing: -.6px; }
.tab .fav { width: 28px; height: 28px; margin-right: 18px; color: #77787b; flex: none; }
.tab .u { width: 32px; height: 22px; margin-left: 2px; margin-right: 17px; }
.tab .x { width: 18px; height: 18px; margin-left: auto; margin-right: 22px; color: #c4c5c7; flex: none; }
.t1 { width: 474px; background: linear-gradient(#5a5b5e, #5a5b5e) right 0 top 15px / 2px 40px no-repeat; }
.t1 .x { margin-right: 23px; }
.t2 { width: 476px; }
.active { width: 480px; background: #35363a; border-radius: 14px 14px 0 0; padding-left: 26px; color: #f4f4f5; position: relative; letter-spacing: -.35px; }
.active .fav { color: #595b5f; }
.active .x { margin-right: 24px; color: #f1f1f1; }
.active::before, .active::after { content: ""; position: absolute; bottom: 0; width: 14px; height: 14px; }
.active::before { left: -14px; background: radial-gradient(circle at 0 0, transparent 13.5px, #35363a 14px); }
.active::after { right: -14px; background: radial-gradient(circle at 100% 0, transparent 13.5px, #35363a 14px); }
.t4 { width: 478px; padding-left: 22px; background: linear-gradient(#5a5b5e, #5a5b5e) right 0 top 15px / 2px 40px no-repeat; }
.t4 .x { margin-right: 23px; }
.plus { width: 24px; height: 24px; margin: 0 0 22px 32px; }

.toolbar { flex: none; height: 74px; background: #35363a; border-bottom: 2px solid #28292c; display: flex; align-items: center; }
.nav { width: 216px; height: 72px; }
.omnibox { width: 2511px; height: 56px; border-radius: 28px; background: #202124; display: flex; align-items: center; padding: 0 20px 0 27px; font: 400 27px/56px Inter, sans-serif; color: #8d8e91; white-space: nowrap; }
.lock { width: 18px; height: 24px; margin-right: 23px; }
.url { width: 1860px; letter-spacing: -.25px; }
.url b { font-weight: 400; color: #fff; }
.star { width: 30px; height: 30px; margin-left: auto; }
.avatar { width: 44px; height: 44px; border-radius: 50%; background: #3b8778; color: #fff; margin-left: 22px; text-align: center; font: 500 23px/44px Inter, sans-serif; }
.kebab { width: 8px; height: 28px; margin-left: 39px; }

.page { flex: 1; min-height: 0; overflow: hidden; }
.brand { height: 150px; background: #1d4935; display: flex; border-left: 2px solid #47685a; border-right: 2px solid #47685a; }
.logo { width: 640px; height: 150px; margin-left: -2px; }
.miami { font: 39px "Liberation Serif", serif; fill: #d9803f; }
.cane { font: 70px "Liberation Serif", serif; fill: #f2fffb; stroke: #f2fffb; stroke-width: .8px; }
.toplinks { display: flex; height: 28px; margin: 70px 0 0 490px; color: #fff; font-weight: bold; }
.toplinks a { padding: 0 12px; border-right: 2px solid #9db3a8; }
.toplinks a:last-child { border: 0; }
.crumbs { height: 50px; margin-left: 4px; background: #142f21; color: #fff; font: bold 24px/28px "Noto Sans", sans-serif; display: grid; grid-template-columns: 135px 10px 153px 38px 170px 34px 300px; padding-left: 7px; white-space: nowrap; letter-spacing: 0; }
.crumbs a { position: relative; justify-self: start; padding-top: 1px; }
.crumbs a:last-child { letter-spacing: .1px; }
.crumbs .wide { letter-spacing: .35px; }
.crumbs .drop::after { content: ""; position: absolute; left: 50%; top: 30px; margin-left: -7px; border: 7px solid transparent; border-top: 9px solid #fff; border-bottom: 0; }
.dots { border-left: 2px dotted #c9d3cd; height: 36px; margin-top: 2px; margin-left: -8px; }
.crumbs svg { width: 8px; height: 14px; margin-top: 10px; fill: none; stroke: #a9b5ae; stroke-width: 1.6px; justify-self: start; }

.content { display: flex; }
.main { width: 1572px; padding: 33px 0 0 26px; }
h1 { width: 1420px; margin-left: 10px; height: 37px; font-size: 29.33px; line-height: 34px; color: #1d4f33; border-bottom: 4px solid #1d4f33; }
.message { width: 998px; height: 132px; margin-top: 64px; background: #f3f3f1; }
.message h2 { height: 32px; line-height: 32px; padding-left: 2px; background: #829873; color: #fff; text-align: center; }
.message a { display: block; margin: 38px 0 0 32px; color: #82a24a; font-weight: bold; text-decoration: underline; text-decoration-thickness: 2px; text-underline-offset: 3px; }
.academics { width: 1508px; height: 924px; margin: 20px 0 0 2px; background: #f3f3f1; }
.academics h2 { height: 32px; line-height: 32px; background: #829873; color: #fff; display: flex; align-items: center; padding-left: 6px; }
.academics .fold { margin: -4px 8px 0 0; }
.fold { width: 18px; height: 12px; }
.acbody { display: flex; }
.aclinks { width: 534px; padding: 44px 0 0 12px; display: flex; flex-direction: column; color: #a85c29; }
.aclinks u { text-decoration-thickness: 2px; text-underline-offset: 3px; }
.pick { display: flex; margin-top: 54px; gap: 10px; }
.select { width: 464px; height: 38px; margin-top: 2px; border: 2px solid #a3a3a3; border-radius: 9px; background: #f7f7f7; color: #000; display: flex; align-items: center; justify-content: space-between; padding: 0 7px 1px 16px; }
.select svg { width: 12px; height: 22px; }
.go { width: 34px; height: 34px; margin-top: 2px; }
.acmain { width: 970px; padding-top: 12px; }
.legend { height: 54px; border: 2px solid #475a8c; display: grid; grid-template-columns: 40px 190px 40px 144px 34px 1fr; padding: 4px 0 0 6px; }
.legend svg { width: 32px; height: 32px; }
.legend .low { margin-top: 2px; }
.sched { width: 832px; margin: 8px 0 0 24px; border: 2px solid #1f4a36; background: #fff; }
.sched h3 { height: 34px; line-height: 31px; background: #829873; color: #fff; border-bottom: 2px solid #fff; padding-left: 4px; }
.row { display: grid; grid-template-columns: 82px 76px 310px 360px; }
.row > div { background: #e9ecf5; border: 0 solid #fff; border-width: 0 2px 2px 0; padding: 4px 4px; display: flex; align-items: center; }
.row > div:nth-child(-n+2) { justify-content: center; padding: 0; }
.row svg { width: 32px; height: 32px; margin-bottom: 8px; }
.row > div:nth-child(2) svg { margin: 0 0 4px 2px; }
.boxed > div { border: 2px solid #2d4373; }
.shade > div { background: #d4dad8; }
.head > div { height: 34px; background: #82a14a; border-width: 0 2px 2px 0; border-bottom-color: #2d4373; justify-content: center; font: bold 21.33px/28px "Liberation Sans", sans-serif; text-decoration: underline; text-decoration-thickness: 2px; text-underline-offset: 3px; padding-top: 6px; padding-left: 6px; }
.head > div:first-child { border-left: 2px solid #e4e7ee; }
.more { width: 776px; margin-top: 4px; display: flex; flex-direction: column; align-items: flex-end; gap: 16px; color: #a85c29; }
.more a, .details { display: flex; }
.more svg, .details svg { width: 18px; height: 20px; margin: 7px 0 0 8px; }
.finances { margin-top: 20px; width: 1502px; height: 40px; background: #829873; color: #fff; }
.finances h2 { padding: 1px 0 0 34px; }

.side { width: 420px; padding-top: 86px; display: flex; flex-direction: column; gap: 20px; }
.card { width: 418px; border: 2px solid #4c5b8b; background: #fff; display: flex; flex-direction: column; }
.card h2 { height: 40px; line-height: 40px; background: #829873; color: #fff; display: flex; align-items: center; padding-left: 10px; }
.card h2 .fold { margin: -3px 9px 0 0; }
.inner { flex: 1; margin: 4px; background: #f3f3f1; }
.card button { display: block; height: 38px; background: #fdf9bd; border: 2px solid #d0d0ce; border-bottom-color: #b5b5b2; font: 24px/28px "Liberation Sans", sans-serif; color: #000; padding: 0 0 2px; }
.search { height: 92px; } .search button { width: 352px; margin: 10px 0 0 28px; }
.delegate { height: 96px; width: 420px; } .delegate button { width: 390px; margin: 18px 0 0 4px; }
.holds { height: 198px; } .holds p { margin: 22px 0 40px 14px; }
.details { margin-left: 249px; color: #a85c29; }
.details svg { margin-left: 6px; }
.todo { height: 110px; } .todo p { margin: 14px 0 0 30px; }
.dates { height: 484px; } .dates h4 { margin: 14px 0 0 18px; } .dates p { margin: 4px 0 0 28px; }
.dates p + h4 { margin-top: 48px; }
.dates .details { margin-top: 18px; }
.advisor { height: 200px; }
.advisor h5 { margin: 10px 0 0 2px; width: 378px; height: 36px; padding: 4px 0 0 5px; background: #829873; color: #fff; }

.behind { flex: none; height: 18px; margin-left: 936px; display: flex; }
.bdark { width: 292px; background: #111413; border-bottom-left-radius: 10px; border: 1px solid #2c2e2d; border-top: 1px solid #000; }
.bgray { flex: 1; border-top: 1px solid #000; background: linear-gradient(90deg, #5c5c5c, #707070 40%, #6b6b6b 80%, #808080 93%, #b5b5b5 97%, #777); display: flex; align-items: flex-end; gap: 5px; padding-left: 337px; }
.bgray i { height: 6px; width: 131px; border: 2px solid #505253; border-bottom: 0; }
.bgray i:nth-child(2) { width: 103px; } .bgray i:nth-child(4) { width: 214px; }

.dock { flex: none; width: 2740px; height: 120px; margin: 34px 0 0 70px; border: 2px solid #3d4753; border-radius: 12px; background: linear-gradient(90deg, #151c29, #161f2f 50%, #121e29); padding: 0 4px; display: flex; }
.dock svg { flex: 1 1 0; min-width: 0; height: 102px; }
.sep { flex: none; width: 40px; height: 78px; margin-top: 12px; background: linear-gradient(#5a6470, #5a6470) center / 2px 100% no-repeat; }
.bt { font: 400 22px Inter, sans-serif; fill: #fff; text-anchor: middle; }
.t3d { font: 11px Inter, sans-serif; fill: #333; text-anchor: middle; }
.apr { font: 17px Inter, sans-serif; fill: #fff; text-anchor: middle; }
.seven { font: 300 38px Inter, sans-serif; fill: #222; text-anchor: middle; }
.ps { font: 600 40px "Open Sans", sans-serif; fill: #e4f5fd; text-anchor: middle; }
.tee { font: bold 28px "Open Sans", sans-serif; fill: #fff; text-anchor: middle; }
```
